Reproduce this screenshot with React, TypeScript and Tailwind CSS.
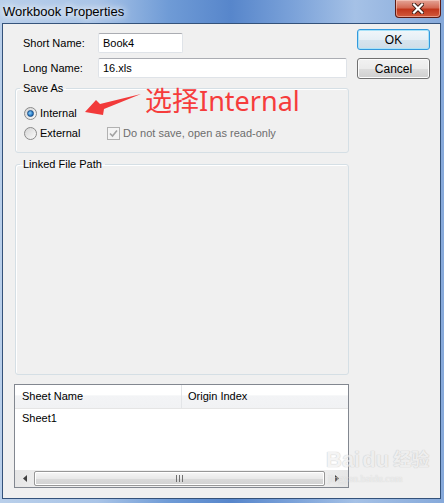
import React from "react";

const ui = { fontFamily: '"Liberation Sans", Arial, sans-serif' };

function Radio({ checked }: { checked?: boolean }) {
  return (
    <span className="relative flex h-[13px] w-[13px] shrink-0 items-center justify-center rounded-full border border-[#8a8a8a] bg-[linear-gradient(135deg,#d4d4d4,#fbfbfb)]">
      {checked && (
        <span className="h-[7px] w-[7px] rounded-full border border-[#1c4f86] bg-[radial-gradient(circle_at_40%_40%,#8fd0f7,#2a7cc8_60%,#17508f)]" />
      )}
    </span>
  );
}

function Button({ children, def }: { children: React.ReactNode; def?: boolean }) {
  return (
    <div
      className={
        "flex h-[21px] w-[73px] items-center justify-center rounded-[3px] border text-[12px] text-black " +
        (def
          ? "border-[#3399dd] bg-[linear-gradient(#f0f6fa_0%,#e6eff5_50%,#d6e4ee_51%,#cfdde8_100%)] shadow-[inset_0_0_0_1px_#a8e2f8]"
          : "border-[#707070] bg-[linear-gradient(#f2f2f2_0%,#ebebeb_50%,#dddddd_51%,#cfcfcf_100%)] shadow-[inset_0_0_0_1px_#fcfcfc]")
      }
    >
      {children}
    </div>
  );
}

export default function App() {
  return (
    <div
      className="relative flex h-[503px] w-[444px] flex-col overflow-hidden bg-[linear-gradient(90deg,#b9cfea_0%,#a9c4e7_22%,#6f9bd6_38%,#5786cb_52%,#7ba2d9_66%,#a5c1e6_80%,#86a9da_100%)]"
      style={ui}
    >
      {/* Title bar */}
      <div className="relative flex h-[23px] shrink-0 items-center pl-[3px]">
        <span
          className="text-[13px] text-black"
          style={{ fontFamily: '"Liberation Sans", Arial, sans-serif', textShadow: "0 0 6px #ffffff, 0 0 10px #ffffff" }}
        >
          Workbook Properties
        </span>
        <div className="absolute right-[3px] top-0 flex h-[18px] w-[46px] items-center justify-center rounded-b-[4px] border border-t-0 border-[#5b1a14] bg-[linear-gradient(#e4a598_0%,#d46a55_45%,#c1361c_55%,#d25a3c_100%)] shadow-[inset_0_0_0_1px_rgba(255,220,210,0.5)]">
          <svg width="12" height="11" viewBox="0 0 12 11">
            <path d="M2 1.5 L10 9.5 M10 1.5 L2 9.5" stroke="#3a1a14" strokeWidth="4" strokeLinecap="square" />
            <path d="M2 1.5 L10 9.5 M10 1.5 L2 9.5" stroke="#ffffff" strokeWidth="2.2" strokeLinecap="square" />
          </svg>
        </div>
      </div>

      {/* Client area */}
      <div className="ml-[2px] mr-[3px] mb-[4px] flex flex-1 border border-[#34527a] bg-[#f0f0f0] text-[11px] text-black">
        {/* Left column */}
        <div className="ml-[11px] flex w-[335px] flex-col pt-[9px]">
          <div className="flex h-[20px] items-center">
            <span className="w-[84px] pl-[9px]">Short Name:</span>
            <div className="flex h-[20px] w-[85px] items-center rounded-[2px] border border-[#dfe3e8] border-t-[#abadb3] bg-white pl-[4px]">
              Book4
            </div>
          </div>
          <div className="mt-[5px] flex h-[20px] items-center">
            <span className="w-[84px] pl-[9px]">Long Name:</span>
            <div className="flex h-[20px] w-[249px] items-center rounded-[2px] border border-[#dfe3e8] border-t-[#abadb3] bg-white pl-[4px]">
              16.xls
            </div>
          </div>

          <fieldset className="ml-[1px] mt-[4px] rounded-[3px] border border-[#d5dfe5] px-[8px] pb-[9px] pt-[8px] shadow-[inset_1px_1px_0_#ffffff]">
            <legend className="ml-[-4px] px-[3px] leading-[13px]">Save As</legend>
            <div className="flex h-[20px] items-center">
              <Radio checked />
              <span className="ml-[3px]">Internal</span>
            </div>
            <div className="flex h-[20px] items-center">
              <div className="flex w-[83px] items-center">
                <Radio />
                <span className="ml-[3px]">External</span>
              </div>
              <span className="flex h-[13px] w-[13px] items-center justify-center border border-[#b1b1b1] bg-[#f4f4f4]">
                <svg width="9" height="9" viewBox="0 0 9 9">
                  <path d="M1 4.5 L3.5 7 L8 1.5" fill="none" stroke="#a3a3a3" strokeWidth="1.6" />
                </svg>
              </span>
              <span className="ml-[3px] text-[#6d6d6d]">Do not save, open as read-only</span>
            </div>
          </fieldset>

          <fieldset className="ml-[1px] mt-[5px] h-[217px] rounded-[3px] border border-[#d5dfe5] shadow-[inset_1px_1px_0_#ffffff]">
            <legend className="ml-[4px] px-[3px] leading-[13px]">Linked File Path</legend>
          </fieldset>

          {/* List view */}
          <div className="mt-[9px] flex h-[104px] flex-col border border-[#828790] bg-white">
            <div className="flex h-[24px] shrink-0 border-b border-[#e5e5e5] bg-[linear-gradient(#ffffff_0%,#ffffff_45%,#f3f4f6_46%,#f1f2f4_100%)]">
              <div className="flex w-[167px] items-center border-r border-[#e3e5e8] pl-[7px]">Sheet Name</div>
              <div className="flex flex-1 items-center pl-[6px]">Origin Index</div>
            </div>
            <div className="flex h-[18px] items-center pl-[7px]">Sheet1</div>
            <div className="flex-1" />
            <div className="flex h-[17px] shrink-0 items-center bg-[linear-gradient(90deg,#e6e6e6,#f0f0f0_10%,#f0f0f0_90%,#e6e6e6)]">
              <div className="flex w-[19px] items-center justify-center">
                <svg width="4" height="7" viewBox="0 0 4 7">
                  <path d="M4 0 L0 3.5 L4 7 Z" fill="#404040" />
                </svg>
              </div>
              <div className="flex h-[15px] w-[291px] items-center justify-center rounded-[2px] border border-[#979797] bg-[linear-gradient(#f6f6f6_0%,#e9e9e9_50%,#dadada_51%,#d2d2d2_100%)] shadow-[inset_0_0_0_1px_#ffffff]">
                <svg width="7" height="7" viewBox="0 0 7 7">
                  <path d="M0.5 0 V7 M3.5 0 V7 M6.5 0 V7" stroke="#707070" strokeWidth="1" />
                </svg>
              </div>
              <div className="flex flex-1 items-center justify-center">
                <svg width="4" height="7" viewBox="0 0 4 7">
                  <path d="M0 0 L4 3.5 L0 7 Z" fill="#404040" />
                </svg>
              </div>
            </div>
          </div>
        </div>

        {/* Right column */}
        <div className="ml-[8px] flex flex-col gap-[8px] pt-[5px]">
          <Button def>OK</Button>
          <Button>Cancel</Button>
        </div>
      </div>

      {/* Annotation overlays */}
      <svg className="pointer-events-none absolute left-0 top-0" width="444" height="503" viewBox="0 0 444 503">
        <polygon points="85,112 96,100 100,104 141,94 104,109 103,115" fill="#f23a3a" />
      </svg>
      <div
        className="pointer-events-none absolute left-[145px] top-[83px] text-[27px] leading-[35px] text-[#f63c3c]"
        style={{ fontFamily: '"Noto Sans", "Noto Sans CJK SC", sans-serif' }}
      >
        选择Internal
      </div>

      {/* Baidu watermark */}
      <div className="pointer-events-none absolute left-[326px] top-[448px] flex flex-col items-start opacity-60">
        <div
          className="flex items-end text-[22px] font-bold leading-[24px] text-[#eeeeee]"
          style={{ fontFamily: '"Liberation Sans", "Noto Sans CJK SC", sans-serif', textShadow: "0 0 1px #b5b5b5, 0 0 1px #b5b5b5" }}
        >
          <span>Bai</span>
          <span className="ml-[2px]">du</span>
          <span className="ml-[4px] text-[18px]">经验</span>
        </div>
        <div
          className="mt-[1px] pl-[2px] text-[10px] leading-[11px] text-[#eeeeee]"
          style={{ fontFamily: '"Liberation Serif", serif', textShadow: "0 0 1px #b5b5b5" }}
        >
          jingyan.baidu.com
        </div>
      </div>
    </div>
  );
}
